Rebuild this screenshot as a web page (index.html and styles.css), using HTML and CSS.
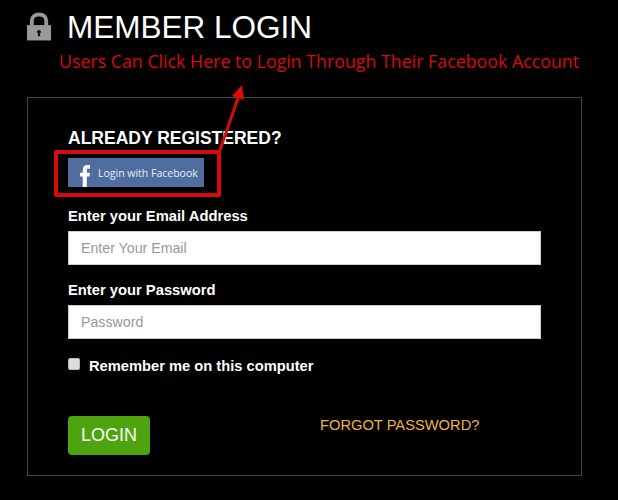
FILE: index.html
```html
<!DOCTYPE html>
<html lang="en">
<head>
<meta charset="utf-8">
<title>Member Login</title>
<link rel="stylesheet" href="styles.css">
</head>
<body>
<main class="page">
  <header class="title-row">
    <svg class="lock" viewBox="0 0 26 30" aria-hidden="true">
      <path class="lock-body" d="M0 13h25v16H0z"/>
      <path class="lock-shackle" d="M5 13V8.500C5 4.500 8 2 12.500 2S20 4.500 20 8.500V13"/>
      <circle class="lock-hole" cx="12.500" cy="20" r="2"/>
      <path class="lock-hole" d="M11.600 20h1.800l.4 4.500h-2.600z"/>
    </svg>
    <h1 class="title">MEMBER LOGIN</h1>
  </header>
  <p class="note">Users Can Click Here to Login Through Their Facebook Account</p>
  <section class="panel">
    <h2 class="sub">ALREADY REGISTERED?</h2>
    <a class="fb" href="#">
      <svg class="fb-icon" viewBox="0 0 11 24" aria-hidden="true"><path d="M3 24V12.500H0V8.500h3V5.500C3 2 5 0 8 0h3v4H9C8 4 7.500 4.500 7.500 5.500V8.500H11l-.6 4H7.500V24z"/></svg>
      <span>Login with Facebook</span>
    </a>
    <label class="field-label label-email" for="email">Enter your Email Address</label>
    <input class="input" id="email" type="text" placeholder="Enter Your Email">
    <label class="field-label label-pass" for="pass">Enter your Password</label>
    <input class="input" id="pass" type="text" placeholder="Password">
    <label class="remember"><input class="check" type="checkbox"><span>Remember me on this computer</span></label>
    <div class="actions">
      <button class="login" type="button">LOGIN</button>
      <a class="forgot" href="#">FORGOT PASSWORD?</a>
    </div>
  </section>
  <div class="callout"></div>
  <svg class="arrow" viewBox="0 0 618 500" aria-hidden="true">
    <path class="arrow-line" d="M219 153 238 98"/>
    <path class="arrow-head" d="M242 85 244 100 232 96z"/>
  </svg>
</main>
</body>
</html>
```

FILE: styles.css
```css
* { box-sizing: border-box; }
html, body { margin: 0; background: #000; }
body { width: 618px; height: 500px; overflow: hidden; font-family: "Liberation Sans", Arial, sans-serif; color: #fff; }
.page { position: relative; width: 618px; height: 500px; padding: 12px 37px 0 27px; }
.title-row { display: flex; align-items: center; height: 30px; }
.lock { width: 25px; height: 30px; flex: none; }
.lock-body { fill: #999; }
.lock-shackle { fill: none; stroke: #999; stroke-width: 4; }
.lock-hole { fill: #111; }
.title { margin: 0 0 0 15px; font-size: 31.500px; font-weight: 400; line-height: 30px; }
.note { margin: 7px 0 0 32px; height: 24px; font-family: "Open Sans", sans-serif; font-size: 17.800px; font-weight: 500; line-height: 24px; color: #d90a0a; white-space: nowrap; }
.panel { width: 555px; height: 379px; margin-top: 24px; padding: 31px 40px 0; border: 1px solid #444; display: flex; flex-direction: column; align-items: flex-start; }
.sub { margin: 0; font-size: 17.500px; line-height: 19px; font-weight: 700; }
.fb { display: flex; align-items: center; width: 136px; height: 29px; margin-top: 10px; background: #4f6d9f; color: #e8edf5; text-decoration: none; font-family: "Open Sans", sans-serif; font-size: 10.500px; white-space: nowrap; overflow: hidden; }
.fb-icon { width: 10px; height: 22px; margin: 7px 0 0 12px; fill: #fff; flex: none; }
.fb span { margin-left: 8px; }
.field-label { font-size: 14.750px; line-height: 17px; font-weight: 700; }
.label-email { margin-top: 21px; }
.label-pass { margin-top: 17px; }
.label-email + .input { margin-top: 6px; }
.label-pass + .input { margin-top: 6px; }
.input { width: 473px; height: 34px; padding: 0 12px; border: 1px solid #ccc; background: #fff; font: 14.200px "Liberation Sans", Arial, sans-serif; }
.input::placeholder { color: #999; opacity: 1; }
.remember { display: flex; align-items: center; margin-top: 18px; height: 17px; font-size: 14.700px; font-weight: 700; }
.check { appearance: none; width: 12px; height: 12px; margin: 0 9px 0 0; position: relative; top: -2px; background: #ddd; border: 1px solid #bbb; border-radius: 2px; }
.actions { display: flex; align-items: flex-start; margin-top: 42px; }
.login { width: 82px; height: 39px; padding: 0; border: 0; border-radius: 4px; background: #4da40f; color: #fff; font: 18px "Liberation Sans", Arial, sans-serif; }
.forgot { margin: 1px 0 0 170px; color: #f0b43c; font-size: 14.700px; line-height: 17px; text-decoration: none; white-space: nowrap; }
.callout { position: absolute; left: 54px; top: 150px; width: 167px; height: 47px; border: 4px solid #d90a0a; border-radius: 2px; }
.arrow { position: absolute; left: 0; top: 0; width: 618px; height: 500px; pointer-events: none; }
.arrow-line { stroke: #d90a0a; stroke-width: 3; fill: none; }
.arrow-head { fill: #e00a0a; }
```
